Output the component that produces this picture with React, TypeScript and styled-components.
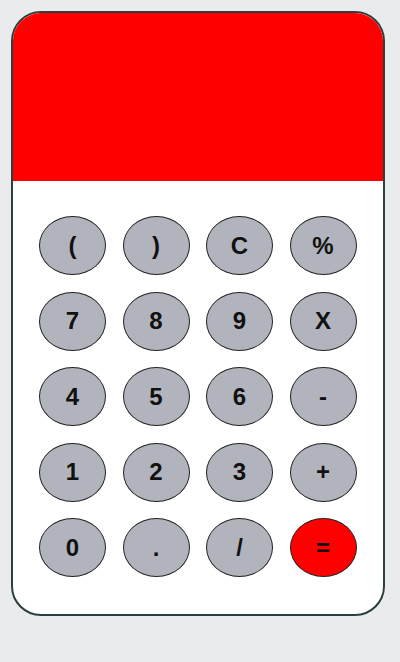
import React, { FC } from 'react';
import styled, { createGlobalStyle } from 'styled-components';

const GlobalStyle = createGlobalStyle`
  body {
    margin: 0;
    background: #e9ebed;
    font-family: "Liberation Sans", Arial, sans-serif;
  }
`;

const keys = [
  '(', ')', 'C', '%',
  '7', '8', '9', 'X',
  '4', '5', '6', '-',
  '1', '2', '3', '+',
  '0', '.', '/', '=',
];

const App: FC = () => {
  return (
    <>
      <GlobalStyle />
      <Page>
        <Calculator>
          <Display />
          <Keypad>
            {keys.map(k => (
              <Key key={k} accent={k === '='}>{k}</Key>
            ))}
          </Keypad>
        </Calculator>
      </Page>
    </>
  );
};

const Page = styled.div`
  padding: 11px;
`;

const Calculator = styled.div`
  width: 370px;
  height: 601px;
  border: 2px solid #2a3f3e;
  border-radius: 30px;
  background: #fff;
  overflow: hidden;
  display: flex;
  flex-direction: column;
`;

const Display = styled.div`
  height: 168px;
  background: #ff0000;
`;

const Keypad = styled.div`
  display: grid;
  grid-template-columns: repeat(4, 67px);
  grid-auto-rows: 59px;
  column-gap: 16.5px;
  row-gap: 16.5px;
  padding: 35px 26px 0;
`;

const Key = styled.button<{ accent?: boolean }>`
  width: 67px;
  height: 59px;
  border-radius: 50%;
  border: 1px solid #222;
  background: ${({ accent }) => (accent ? '#ff0000' : '#b1b4bc')};
  color: #111;
  font-family: "Liberation Sans", Arial, sans-serif;
  font-weight: 700;
  font-size: 24px;
  padding: 0;
  display: flex;
  align-items: center;
  justify-content: center;
  cursor: pointer;
`;

export default App;
